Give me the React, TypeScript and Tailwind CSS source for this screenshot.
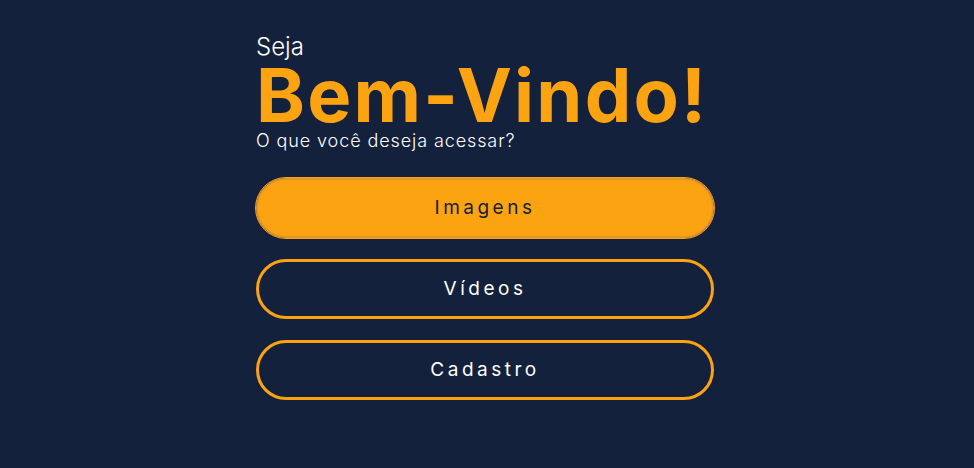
export default function App() {
  const buttons = [
    { label: "Imagens", active: true },
    { label: "Vídeos", active: false },
    { label: "Cadastro", active: false },
  ]

  return (
    <div className="flex min-h-[468px] w-full justify-center bg-[#14213d] pr-[4px] font-['Inter',sans-serif]">
      <div className="flex w-[458px] flex-col pt-[33px]">
        <p className="text-[24px] font-light leading-[28px] text-white">Seja</p>
        <h1 className="mt-[1px] text-[74px] font-bold leading-[66px] tracking-[2.2px] text-[#fca311]">Bem-Vindo!</h1>
        <p className="mt-[2px] text-[18px] font-light leading-[22px] tracking-[0.9px] text-white">O que você deseja acessar?</p>

        <div className="mt-[26px] flex flex-col gap-[21px]">
          {buttons.map((b) => (
            <button
              key={b.label}
              className={
                b.active
                  ? "h-[60px] w-full rounded-full border-[2px] border-[#e0962a] bg-[#fca311] text-[19px] font-normal tracking-[3.5px] text-[#14213d] outline outline-1 outline-[#fca311]"
                  : "h-[60px] w-full rounded-full border-[3px] border-[#fca311] bg-transparent text-[19px] font-normal tracking-[3.5px] text-white"
              }
            >
              {b.label}
            </button>
          ))}
        </div>
      </div>
    </div>
  )
}
